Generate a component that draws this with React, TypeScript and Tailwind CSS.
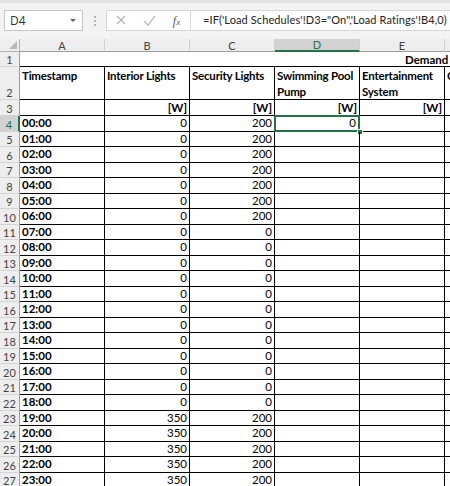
import React from 'react';

const times = Array.from({ length: 24 }, (_, i) => `${String(i).padStart(2, '0')}:00`);
const interior = times.map((_, i) => (i >= 19 ? 350 : 0));
const security = times.map((_, i) => (i <= 6 || i >= 19 ? 200 : 0));

const cols = ['A', 'B', 'C', 'D', 'E', 'F'];

function RowHeader({ n, active, className = '' }: { n: number; active?: boolean; className?: string }) {
  return (
    <div
      className={`w-[20px] shrink-0 flex items-end justify-center pb-[1px] text-[11px] leading-none border-b border-[#d4d4d4] ${
        active
          ? 'bg-[#d2d2d2] text-[#217346] border-r-2 border-r-[#217346]'
          : 'bg-[#eeeeee] text-[#444] border-r border-r-[#9b9b9b]'
      } ${className}`}
    >
      {n}
    </div>
  );
}

export default function App() {
  return (
    <div className="w-[450px] h-[486px] overflow-hidden bg-white text-black font-['Lato','Liberation_Sans',sans-serif]">
      {/* Formula bar */}
      <div className="h-[39px] bg-[#f3f3f3] border-t-[3px] border-[#e3e3e3] flex items-start pt-[7px]">
        <div className="ml-[4px] w-[79px] h-[21px] bg-white border border-[#c6c6c6] flex items-center justify-between px-[5px]">
          <span className="text-[12px] text-[#333] font-['Open_Sans',sans-serif]">D4</span>
          <span className="w-0 h-0 border-l-[3px] border-r-[3px] border-t-[3px] border-l-transparent border-r-transparent border-t-[#666] mr-[1px]" />
        </div>
        <div className="w-[23px] h-[21px] flex flex-col items-center justify-center gap-[2px]">
          <span className="w-[2px] h-[2px] bg-[#b5b5b5]" />
          <span className="w-[2px] h-[2px] bg-[#b5b5b5]" />
          <span className="w-[2px] h-[2px] bg-[#b5b5b5]" />
        </div>
        <div className="h-[21px] w-[84px] bg-white border border-[#d6d6d6] border-r-0 flex items-center">
          <svg width="28" height="21" viewBox="0 0 28 21" className="shrink-0">
            <path d="M10 6 L18 14 M18 6 L10 14" stroke="#b3b3b3" strokeWidth="1.2" fill="none" />
          </svg>
          <svg width="28" height="21" viewBox="0 0 28 21" className="shrink-0">
            <path d="M9 11 L13 15 L20 6" stroke="#b3b3b3" strokeWidth="1.2" fill="none" />
          </svg>
          <span className="w-[28px] text-center text-[12px] italic text-[#555] font-['Liberation_Serif',serif]">
            f<span className="text-[9px]">x</span>
          </span>
        </div>
        <div className="h-[21px] flex-1 bg-white border border-[#d6d6d6] border-r-0 flex items-center pl-[12px] whitespace-nowrap overflow-hidden">
          <span className="text-[11px] tracking-[0.1px] text-[#222] font-['Lato',sans-serif]">
            =IF('Load Schedules'!D3="On",'Load Ratings'!B4,0)
          </span>
        </div>
      </div>

      {/* Column headers */}
      <div className="flex h-[13px]">
        <div className="w-[20px] shrink-0 bg-[#eeeeee] border-r border-b border-[#b5b5b5] relative overflow-hidden">
          <div className="absolute right-[2px] bottom-[2px] w-0 h-0 border-l-[8px] border-l-transparent [border-bottom:8px_solid_#b9b9b9]" />
        </div>
        {cols.map((c) => (
          <div
            key={c}
            className={`w-[85px] shrink-0 flex items-center justify-center text-[11px] leading-none border-r border-[#d0d0d0] ${
              c === 'D'
                ? 'bg-[#d2d2d2] text-[#217346] border-b-2 border-b-[#217346]'
                : 'bg-[#eeeeee] text-[#444] border-b border-b-[#9b9b9b]'
            }`}
          >
            {c}
          </div>
        ))}
      </div>

      {/* Row 1 */}
      <div className="flex h-[15px]">
        <RowHeader n={1} />
        <div className="flex-1 border-b border-black overflow-hidden flex">
          <span className="ml-[385px] text-[11.5px] font-bold leading-[15px] whitespace-nowrap">
            Demand Profile
          </span>
        </div>
      </div>

      {/* Row 2 */}
      <div className="flex h-[33px]">
        <RowHeader n={2} />
        {['Timestamp', 'Interior Lights', 'Security Lights', 'Swimming Pool Pump', 'Entertainment System', 'Cooling'].map((h) => (
          <div
            key={h}
            className="w-[85px] shrink-0 border-r border-b border-black px-[2px] pt-[1px] text-[11.5px] font-bold leading-[16px] tracking-[-0.2px] overflow-hidden"
          >
            {h}
          </div>
        ))}
      </div>

      {/* Row 3 */}
      <div className="flex h-[16px]">
        <RowHeader n={3} />
        {['', '[W]', '[W]', '[W]', '[W]', '[W]'].map((u, i) => (
          <div
            key={i}
            className="w-[85px] shrink-0 border-r border-b border-black px-[2px] text-right text-[11.5px] font-bold leading-[15px]"
          >
            {u}
          </div>
        ))}
      </div>

      {/* Data rows */}
      {times.map((t, i) => (
        <div key={t} className="flex h-[15.5px]">
          <RowHeader n={i + 4} active={i === 0} />
          <div className="w-[85px] shrink-0 border-r border-b border-black px-[2px] text-[11.5px] font-bold leading-[14.5px]">
            {t}
          </div>
          <div className="w-[85px] shrink-0 border-r border-b border-black px-[2px] text-right text-[11.5px] leading-[14.5px]">
            {interior[i]}
          </div>
          <div className="w-[85px] shrink-0 border-r border-b border-black px-[2px] text-right text-[11.5px] leading-[14.5px]">
            {security[i]}
          </div>
          <div className="w-[85px] shrink-0 border-r border-b border-black px-[2px] text-right text-[11.5px] leading-[14.5px] relative">
            {i === 0 && (
              <>
                <div className="absolute -left-[1px] -top-[1px] -right-[1px] -bottom-[1px] border-2 border-[#217346]" />
                <div className="absolute -right-[4px] -bottom-[4px] w-[6px] h-[6px] bg-[#217346] border border-white" />
                <span className="relative pr-[1px]">0</span>
              </>
            )}
          </div>
          <div className="w-[85px] shrink-0 border-r border-b border-black" />
          <div className="w-[85px] shrink-0 border-r border-b border-black" />
        </div>
      ))}
    </div>
  );
}
